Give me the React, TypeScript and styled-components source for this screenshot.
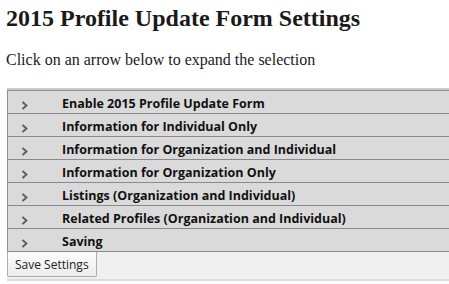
import React from 'react';
import styled, { createGlobalStyle } from 'styled-components';

const GlobalStyle = createGlobalStyle`
    html, body {
        margin: 0;
        padding: 0;
        background: #ffffff;
        overflow: hidden;
    }
`;

const Page = styled.div`
    padding: 0 0 0 6px;
    font-family: "Liberation Serif", "Times New Roman", serif;
    color: #1a1a1a;
`;

const Title = styled.h2`
    font-size: 24px;
    font-weight: bold;
    margin: 0;
    padding-top: 5px;
    line-height: 27px;
`;

const Hint = styled.p`
    font-size: 16px;
    margin: 18px 0 19px 0;
    line-height: 19px;
`;

const Panel = styled.div`
    margin-left: 1px;
    border-top: 2px solid #c9c9c9;
`;

const Sections = styled.div`
    border-left: 1px solid #8f8f8f;
    border-top: 1px solid #8f8f8f;
`;

const Row = styled.div`
    display: flex;
    align-items: center;
    height: 22px;
    background: #dadada;
    border-bottom: 1px solid #8a8a8a;
    cursor: pointer;
`;

const Arrow = styled.span`
    width: 54px;
    display: flex;
    justify-content: flex-start;
    padding-left: 13px;
    box-sizing: border-box;
    margin-top: 7px;
`;

const Label = styled.span`
    font-family: "Open Sans", "DejaVu Sans", sans-serif;
    font-weight: 700;
    font-size: 12.5px;
    color: #111;
    margin-top: 3px;
`;

const Footer = styled.div`
    background: #f0f0f0;
    border-bottom: 2px solid #dcdcdc;
    height: 27px;
    display: flex;
    align-items: flex-start;
`;

const SaveButton = styled.button`
    font-family: "Open Sans", "DejaVu Sans", sans-serif;
    font-size: 12px;
    color: #222;
    height: 25px;
    padding: 0 7px;
    background: linear-gradient(#fcfcfc, #ececec);
    border: 1px solid #acacac;
    border-top: none;
    border-radius: 0 0 2px 2px;
`;

const SECTIONS: string[] = [
    'Enable 2015 Profile Update Form',
    'Information for Individual Only',
    'Information for Organization and Individual',
    'Information for Organization Only',
    'Listings (Organization and Individual)',
    'Related Profiles (Organization and Individual)',
    'Saving',
];

function Chevron() {
    return (
        <svg width="7" height="9" viewBox="0 0 7 9">
            <polyline points="1.5,1 5.5,4.5 1.5,8" fill="none" stroke="#5a5a5a" strokeWidth="1.8" />
        </svg>
    );
}

export default function App() {
    return (
        <Page>
            <GlobalStyle />
            <Title>2015 Profile Update Form Settings</Title>
            <Hint>Click on an arrow below to expand the selection</Hint>
            <Panel>
                <Sections>
                    {SECTIONS.map((s) => (
                        <Row key={s}>
                            <Arrow><Chevron /></Arrow>
                            <Label>{s}</Label>
                        </Row>
                    ))}
                </Sections>
                <Footer>
                    <SaveButton>Save Settings</SaveButton>
                </Footer>
            </Panel>
        </Page>
    );
}
